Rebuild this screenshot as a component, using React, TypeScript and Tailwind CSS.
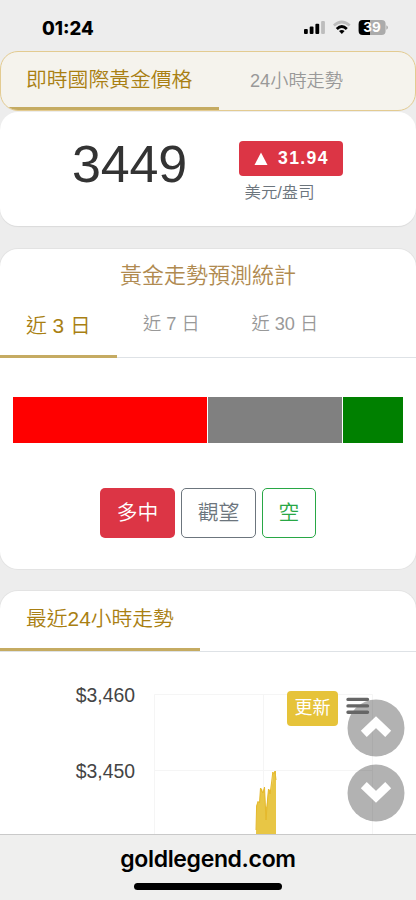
import type { ReactNode } from "react";

const PRICE_FONT = "font-['Liberation_Sans','Noto_Sans_CJK_TC',sans-serif]";

// 漲跌預測比例
const forecast = [
	{ id: "up", color: "bg-[#ff0000]", width: 194 },
	{ id: "hold", color: "bg-[#808080]", width: 134 },
	{ id: "down", color: "bg-[#008000]", width: 60 },
];

const StatusBar = () => (
	<header className="flex h-[51px] shrink-0 items-start justify-between pl-[42px] pr-[28px]">
		<span className="mt-[16px] font-['Inter',sans-serif] text-[18.5px] leading-6 font-extrabold text-black">
			01:24
		</span>
		<svg width="84" height="16" viewBox="0 0 84 16" className="mt-[20px]">
			<title>status</title>
			<rect x="0" y="9" width="3.8" height="5" rx="1" />
			<rect x="5.7" y="6.6" width="3.8" height="7.4" rx="1" />
			<rect x="11.4" y="3.8" width="3.8" height="10.2" rx="1" />
			<rect x="17.1" y="1" width="3.8" height="13" rx="1" fill="#bdbdbd" />
			<path d="M29.9 5.6Q37.8 -1.6 45.7 5.6" fill="none" stroke="#bdbdbd" strokeWidth="2.7" />
			<path d="M32.8 8.9Q37.8 4 42.8 8.9" fill="none" stroke="#000" strokeWidth="2.8" />
			<path d="M35 11Q37.8 9 40.6 11L37.8 14Z" />
			<path d="M58.6 0H66V15H58.6Q54.6 15 54.6 11V4Q54.6 0 58.6 0Z" />
			<path d="M66 0H77.6Q81.6 0 81.6 4V11Q81.6 15 77.6 15H66Z" fill="#ababab" />
			<path d="M82.3 5.3Q84 6 84 7.5T82.3 9.7Z" fill="#ababab" />
			<text x="68" y="12.4" textAnchor="middle" fill="#fff" className="font-['Inter',sans-serif] text-[13.5px] font-bold">
				39
			</text>
		</svg>
	</header>
);

const Tab = ({ active, className, children }: { active?: boolean; className: string; children: ReactNode }) => (
	<button
		type="button"
		className={`flex items-center whitespace-nowrap ${active ? "text-[20.8px] text-[#a97f12]" : "text-[18.2px] text-[#999]"} ${className}`}
	>
		{children}
	</button>
);

const PriceCard = () => (
	<section className="mt-px flex h-[114px] shrink-0 rounded-[18px] bg-white shadow-[0_1px_1px_rgba(0,0,0,0.08)]">
		<div className="ml-[72px] mt-[22px] w-[167px] text-[52px] leading-[60px] tracking-[-0.2px] text-[#333]">3449</div>
		<div className="mt-[29px] flex flex-col">
			<span className="flex h-[35px] w-[104px] items-center rounded-[4px] bg-[#dc3545] pl-[15px] text-[17.6px] font-bold tracking-[1.35px] text-white">
				<svg width="14" height="13" viewBox="0 0 14 13" className="mr-[10px]" fill="currentColor">
					<title>up</title>
					<path d="M7 0.5L13.5 13H0.5Z" />
				</svg>
				31.94
			</span>
			<span className="ml-[5.5px] mt-[4px] text-[16.4px] leading-6 font-[350] text-[#6c757d]">美元/盎司</span>
		</div>
	</section>
);

const ForecastCard = () => (
	<section className="mt-[23px] h-[320px] shrink-0 rounded-[18px] bg-white shadow-[0_0_0_1px_rgba(0,0,0,0.04)]">
		<h2 className="pt-[11px] text-center text-[22px] leading-8 font-[350] text-[#b08a50]">黃金走勢預測統計</h2>
		<div className="flex h-[66px] border-b border-[#dee2e6] font-[350]">
			<Tab active className="h-[66px] w-[117px] border-b-[3px] border-[#c5ab62] pt-[4px] pl-[26px]">近 3 日</Tab>
			<Tab className="h-[66px] w-[108px] pl-[26px]">近 7 日</Tab>
			<Tab className="h-[66px] pl-[26.5px]">近 30 日</Tab>
		</div>
		<div className="mt-[39px] flex h-[46px] gap-px pl-[13px]">
			{forecast.map((item) => (
				<div key={item.id} className={item.color} style={{ width: item.width }} />
			))}
		</div>
		<div className="mt-[45px] flex justify-center gap-[6px] text-[20.8px] font-[350]">
			<button type="button" className="h-[50px] w-[75px] rounded-[5px] bg-[#dc3545] pb-px text-white">多中</button>
			<button type="button" className="h-[50px] w-[75px] rounded-[5px] border border-[#6c757d] pb-px text-[#6c757d]">觀望</button>
			<button type="button" className="h-[50px] w-[54px] rounded-[5px] border border-[#28a745] pb-px text-[#28a745]">空</button>
		</div>
	</section>
);

const TrendCard = () => (
	<section className="mt-[22px] flex min-h-0 flex-1 flex-col rounded-t-[18px] bg-white shadow-[0_0_0_1px_rgba(0,0,0,0.04)]">
		<div className="flex h-[61px] shrink-0 border-b border-[#dee2e6] font-[350]">
			<Tab active className="h-[60px] w-[200px] border-b-[3px] border-[#c5ab62] pb-[2px] pl-[26px]">最近24小時走勢</Tab>
		</div>
		<div className="relative flex min-h-0 flex-1">
			<div className="flex w-[154px] flex-col gap-[52px] pt-[31px] pr-[19px] text-right text-[19.4px] leading-6 text-[#444]">
				<span>$3,460</span>
				<span>$3,450</span>
			</div>
			<svg width="262" height="182" viewBox="154 652 262 182">
				<title>24h</title>
				<path d="M154.5 834V694.5H372.5V834M263.5 694.5V834M154 770.5H372" fill="none" stroke="#f5f5f5" />
				<path
					d="M256 834L256.5 806L258 801L259.5 803L260.5 788L262 789L263 792L264.5 787L265.5 806L266.5 807L268.5 789L270 790L271 791L271.5 782L272 785L272.8 772L274 774L275 771L276 771V834Z"
					fill="#e8c645"
				/>
				<path
					d="M256 830L256.6 806L258 801.5L259.5 803L260.5 788L262 792L263 793L264.5 787L266 820L267.5 800L268.5 789L270 794L271.5 783L272.8 772L274 774L275 771L276 780"
					fill="none"
					stroke="#e5b92c"
				/>
			</svg>
			<button
				type="button"
				className="absolute left-[287px] top-[39px] h-[35px] w-[51px] rounded-[4px] bg-[#e6c33a] pb-[2px] text-[18px] leading-none text-white"
			>
				更新
			</button>
			<ScrollButton label="top" className="absolute left-[347px] top-[47px]" points="16.8,34.8 29,23.2 41.2,34.8" />
			<ScrollButton label="bottom" className="absolute left-[347px] top-[112px]" points="16.8,21.2 29,32.8 41.2,21.2" />
			<svg width="24" height="18" viewBox="0 0 24 18" className="absolute left-[346px] top-[45px]">
				<title>menu</title>
				<path d="M2 2.4H21.5M2 8.9H21.5M2 15.3H21.5" stroke="#666" strokeWidth="3.4" strokeLinecap="round" />
			</svg>
		</div>
	</section>
);

const ScrollButton = ({ label, points, className }: { label: string; points: string; className: string }) => (
	<svg width="58" height="58" viewBox="0 0 58 58" className={className}>
		<title>{label}</title>
		<circle cx="29" cy="29" r="28.5" fill="#000" fillOpacity="0.3" />
		<polyline points={points} fill="none" stroke="#fff" strokeWidth="8.6" />
	</svg>
);

export default function App() {
	return (
		<div className={`flex h-[900px] w-[416px] flex-col overflow-hidden bg-[#ededed] ${PRICE_FONT}`}>
			<StatusBar />
			<nav className="flex h-[60px] shrink-0 overflow-hidden rounded-[18px] border border-[#e3cb91] bg-[#f5f3ed] font-[350]">
				<Tab active className="-ml-px h-[58px] w-[219px] border-b-[3px] border-[#c5ab62] pt-px pl-[26px]">
					即時國際黃金價格
				</Tab>
				<Tab className="h-[58px] pt-[2px] pl-[31px]">24小時走勢</Tab>
			</nav>
			<PriceCard />
			<ForecastCard />
			<TrendCard />
			<footer className="flex h-[66px] shrink-0 flex-col items-center border-t border-[#c9c9c9] bg-[#efefee]">
				<span className="mt-[8px] font-['Inter',sans-serif] text-[23px] leading-8 font-semibold tracking-[-0.35px] text-black">goldlegend.com</span>
				<span className="mt-[8px] h-[7px] w-[148px] rounded-full bg-black" />
			</footer>
		</div>
	);
}
